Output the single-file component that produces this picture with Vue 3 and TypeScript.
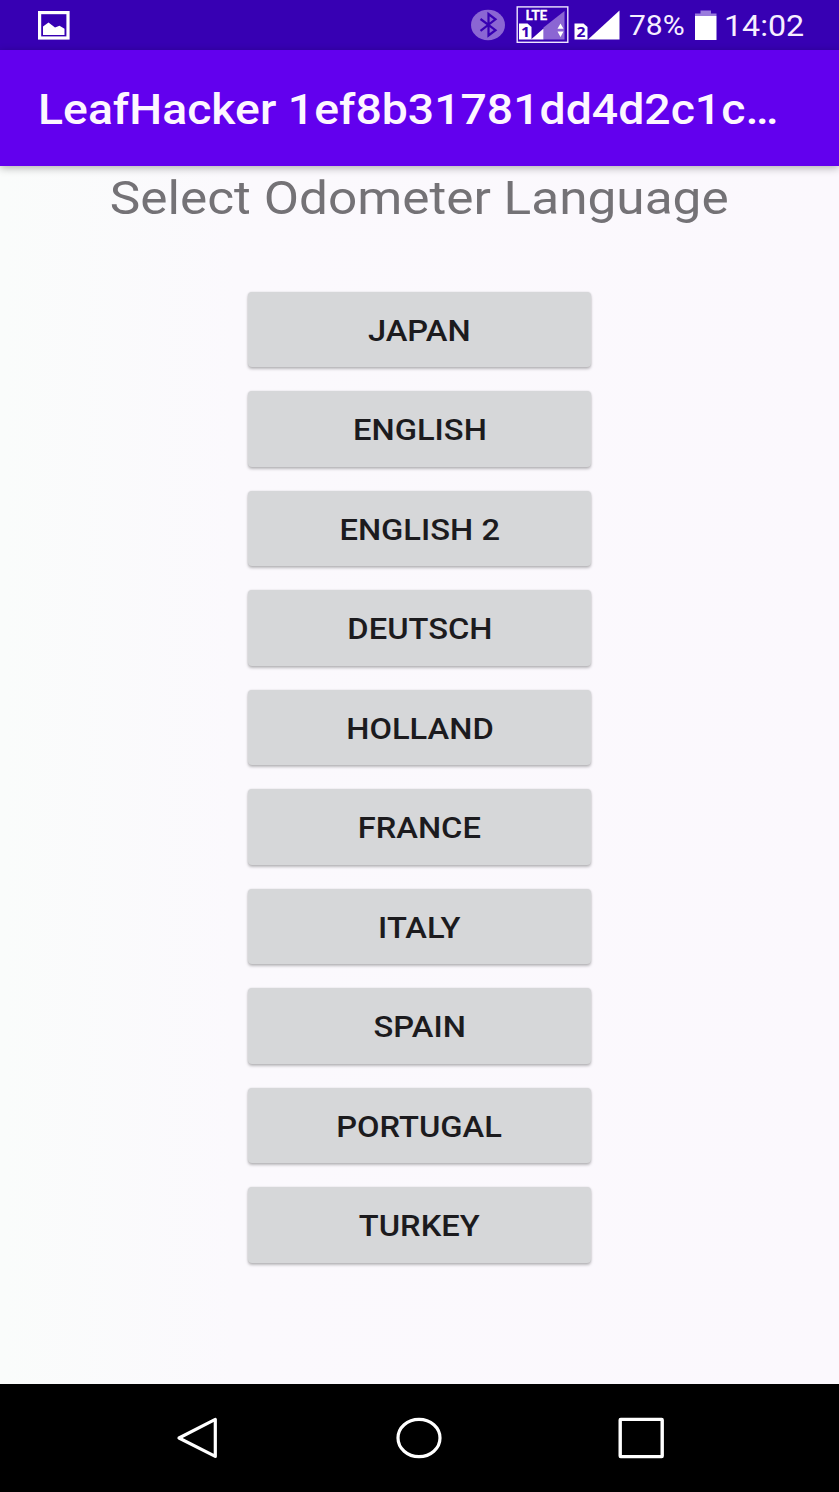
<script setup lang="ts">
const languages: string[] = [
  'JAPAN',
  'ENGLISH',
  'ENGLISH 2',
  'DEUTSCH',
  'HOLLAND',
  'FRANCE',
  'ITALY',
  'SPAIN',
  'PORTUGAL',
  'TURKEY',
]
</script>

<template>
  <div class="screen">
    <header class="status">
      <svg class="picture" width="32" height="29" viewBox="0 0 32 29">
        <rect x="1.6" y="1.6" width="28.4" height="25.4" fill="none" stroke="#fff" stroke-width="3.2" />
        <path d="M5 24V15.5L10.5 11.5L17 16.5L21.5 14.8L26.5 17.8V24Z" fill="#fff" />
      </svg>
      <svg class="indicators" width="152" height="40" viewBox="470 4 152 40">
        <ellipse cx="488" cy="25" rx="17" ry="15.3" fill="#8b66d3" />
        <path d="M480.5 19L495.5 30.2L488.5 35.5V14L495.5 19.3L480.5 30.8" fill="none" stroke="#3700b3" stroke-width="2.2" />
        <rect x="517.2" y="6.9" width="50.6" height="35.4" fill="none" stroke="#eee5ff" stroke-width="1.4" />
        <path d="M543.5 27.5L564.5 11V39.5H543.5Z" fill="#8b66d3" />
        <path d="M531 39.5L543.5 28.5V39.5Z" fill="#fff" />
        <path d="M519 23.5H527.5L531.5 27V39.5H519Z" fill="#fff" />
        <path d="M557.5 28.8L560.5 23.5L563.5 28.8ZM557.5 31.5H563.5L560.5 37Z" fill="#fff" />
        <text x="525.5" y="20.3" class="lte" textLength="22" lengthAdjust="spacingAndGlyphs">LTE</text>
        <text x="521" y="37" class="sim" textLength="9" lengthAdjust="spacingAndGlyphs">1</text>
        <path d="M574.5 23.5H583.5L587.5 27V39.5H574.5Z" fill="#fff" />
        <path d="M588 39.5L619.5 10.5V39.5Z" fill="#fff" />
        <text x="576.5" y="37" class="sim" textLength="9" lengthAdjust="spacingAndGlyphs">2</text>
      </svg>
      <span class="percent">78%</span>
      <svg class="battery" width="22" height="31" viewBox="0 0 22 31">
        <path d="M0 6V3.5H5.5V0.5H16V3.5H21.5V6Z" fill="#9a7bdd" />
        <rect y="6" width="21.5" height="24" fill="#fff" />
      </svg>
      <span class="clock">14:02</span>
    </header>

    <div class="appbar">
      <h1 class="title">LeafHacker 1ef8b31781dd4d2c1c…</h1>
    </div>

    <main class="content">
      <h2 class="heading"><span>Select Odometer Language</span></h2>
      <div class="list">
        <button v-for="name in languages" :key="name" class="lang" type="button">
          <span>{{ name }}</span>
        </button>
      </div>
    </main>

    <nav class="nav">
      <svg width="46" height="42" viewBox="0 0 46 42">
        <path d="M41.3 2.4V39.4L5 21Z" fill="none" stroke="#fff" stroke-width="3.2" stroke-linejoin="round" />
      </svg>
      <svg width="46" height="42" viewBox="0 0 46 42">
        <ellipse cx="23" cy="21" rx="21" ry="18.7" fill="none" stroke="#fff" stroke-width="3.2" />
      </svg>
      <svg width="46" height="42" viewBox="0 0 46 42">
        <rect x="2.2" y="2.4" width="42" height="37.2" rx="0.5" fill="none" stroke="#fff" stroke-width="3.4" />
      </svg>
    </nav>
  </div>
</template>

<style>
body {
  margin: 0;
}
</style>

<style scoped>
.screen {
  display: flex;
  flex-direction: column;
  width: 839px;
  height: 1492px;
  overflow: hidden;
  font-family: Roboto, 'Liberation Sans', sans-serif;
  background: linear-gradient(90deg, #fafcfb 0, #fbf9fd 28%, #fbf8fd 100%);
}
.status {
  display: flex;
  flex: none;
  box-sizing: border-box;
  height: 49.5px;
  padding: 0 0 0 37.5px;
  background: #3700b3;
  color: #f6efff;
}
.status svg {
  flex: none;
}
.picture {
  margin-top: 10.5px;
}
.indicators {
  margin: 4px 0 0 400.5px;
}
.lte {
  font: 700 12.8px Lato, 'Open Sans', sans-serif;
  fill: #fff;
  stroke: #fff;
  stroke-width: 0.3;
}
.sim {
  font: 700 14.5px 'Open Sans', sans-serif;
  fill: #3700b3;
}
.percent,
.clock {
  flex: none;
  line-height: 52.5px;
  white-space: nowrap;
  transform: scaleX(1.11);
  transform-origin: 0 50%;
}
.percent {
  width: 66px;
  margin-left: 7px;
  font-size: 27px;
}
.battery {
  margin-top: 9.5px;
}
.clock {
  margin-left: 7px;
  font-size: 29px;
}
.appbar {
  z-index: 1;
  flex: none;
  height: 116px;
  padding-left: 37.5px;
  background: #6200ee;
  box-shadow: 0 2px 8px rgba(0, 0, 0, 0.3);
}
.title {
  margin: 0;
  width: max-content;
  font-size: 42px;
  font-weight: 500;
  line-height: 120px;
  color: #fdf6ff;
  white-space: nowrap;
  transform: scaleX(1.104);
  transform-origin: 0 50%;
}
.content {
  display: flex;
  flex: 1;
  flex-direction: column;
  align-items: center;
}
.heading {
  margin: 0;
  height: 126px;
  font-size: 46px;
  font-weight: 400;
  line-height: 65px;
  color: #747276;
}
.heading span,
.lang span {
  display: inline-block;
  white-space: nowrap;
  transform: scaleX(1.116);
}
.list {
  display: flex;
  flex-direction: column;
  gap: 24px;
}
.lang {
  width: 343px;
  height: 75.5px;
  padding: 3px 0 0;
  border: 0;
  border-radius: 4px;
  background: #d6d7d9;
  box-shadow: 0 2px 3px rgba(0, 0, 0, 0.26), 0 0 2px rgba(0, 0, 0, 0.12);
  font: 500 28.8px Roboto, 'Liberation Sans', sans-serif;
  color: #1c1b1e;
}
.lang span {
  transform: scaleX(1.135);
}
.nav {
  display: flex;
  flex: none;
  box-sizing: border-box;
  height: 108px;
  padding-left: 174.4px;
  gap: 176px;
  align-items: center;
  background: #000;
}
</style>
